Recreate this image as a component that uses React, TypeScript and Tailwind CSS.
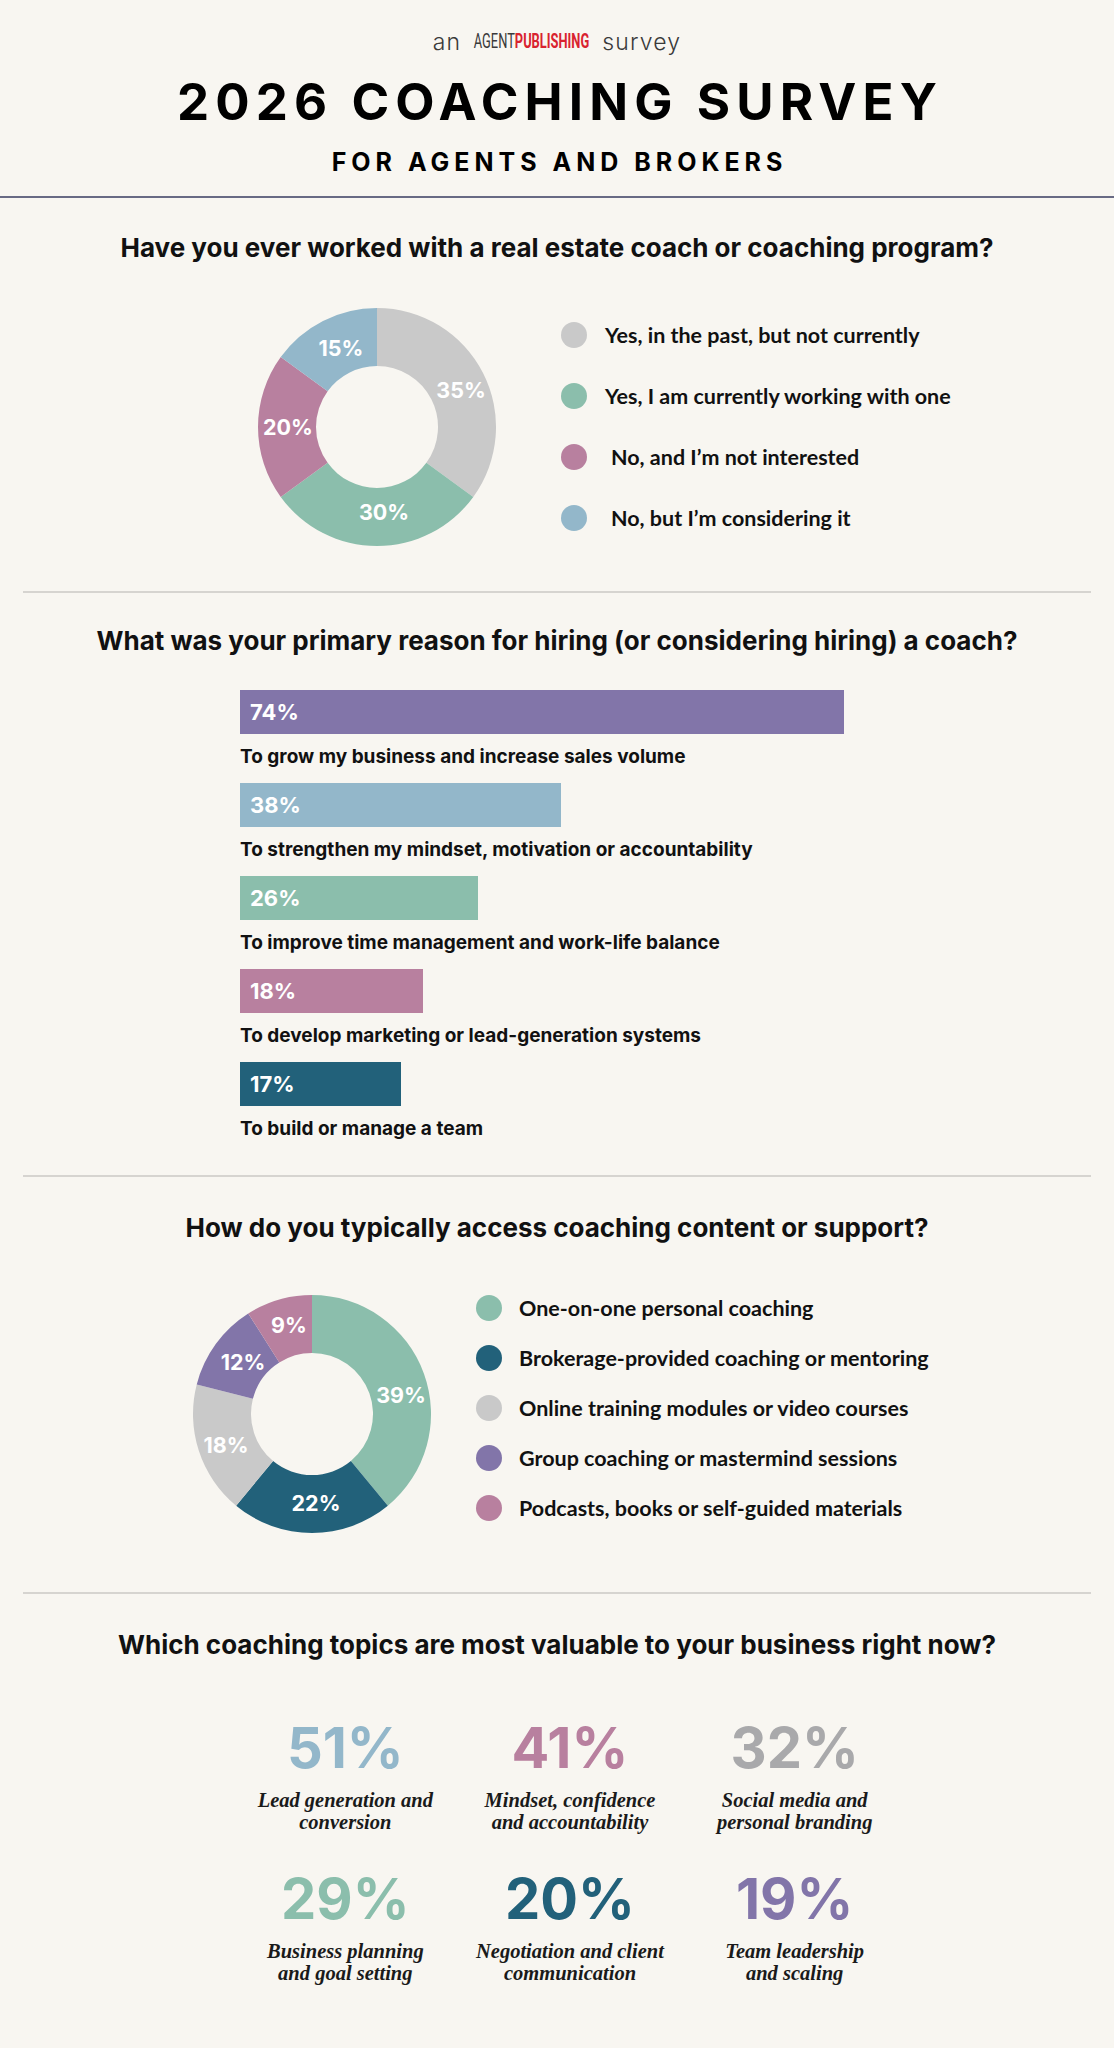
import { FC } from "react";

const COLORS = {
  gray: "#c9c9c9",
  green: "#8bbeac",
  pink: "#b8809f",
  blue: "#93b7ca",
  purple: "#8275a9",
  teal: "#22617a",
};

interface Slice {
  value: number;
  color: string;
  dx: number;
  dy: number;
}

const pt = (r: number, turn: number, c: number): [number, number] => [
  c + r * Math.sin(turn * 2 * Math.PI),
  c - r * Math.cos(turn * 2 * Math.PI),
];

const Donut: FC<{ slices: Slice[] }> = ({ slices }) => {
  const c = 119;
  const outer = 119;
  const inner = 61;
  let start = 0;
  return (
    <svg width="238" height="238" viewBox="0 0 238 238" className="shrink-0">
      {slices.map((s, i) => {
        const a0 = start;
        const a1 = start + s.value / 100;
        start = a1;
        const large = a1 - a0 > 0.5 ? 1 : 0;
        const [x1, y1] = pt(outer, a0, c);
        const [x2, y2] = pt(outer, a1, c);
        const [x3, y3] = pt(inner, a1, c);
        const [x4, y4] = pt(inner, a0, c);
        const d = `M${x1} ${y1} A${outer} ${outer} 0 ${large} 1 ${x2} ${y2} L${x3} ${y3} A${inner} ${inner} 0 ${large} 0 ${x4} ${y4} Z`;
        return <path key={i} d={d} fill={s.color} />;
      })}
      {slices.map((s, i) => (
        <text
          key={`t${i}`}
          x={c + s.dx}
          y={c + s.dy}
          textAnchor="middle"
          dominantBaseline="central"
          fill="#ffffff"
          fontFamily="Inter, sans-serif"
          fontWeight={700}
          fontSize="21.5"
        >
          {s.value}%
        </text>
      ))}
    </svg>
  );
};

const Divider: FC = () => <div className="mx-[23px] h-[2px] bg-[#d6d4d0]" />;

const Question: FC<{ text: string; className: string }> = ({ text, className }) => (
  <h2 className={`text-center text-[26px] leading-[32px] font-bold text-[#111111] ${className}`}>{text}</h2>
);

const legend1 = [
  { color: COLORS.gray, text: "Yes, in the past, but not currently", indent: false },
  { color: COLORS.green, text: "Yes, I am currently working with one", indent: false },
  { color: COLORS.pink, text: "No, and I’m not interested", indent: true },
  { color: COLORS.blue, text: "No, but I’m considering it", indent: true },
];

const legend2 = [
  { color: COLORS.green, text: "One-on-one personal coaching" },
  { color: COLORS.teal, text: "Brokerage-provided coaching or mentoring" },
  { color: COLORS.gray, text: "Online training modules or video courses" },
  { color: COLORS.purple, text: "Group coaching or mastermind sessions" },
  { color: COLORS.pink, text: "Podcasts, books or self-guided materials" },
];

const bars = [
  { pct: "74%", width: "w-[604px]", color: "bg-[#8275a9]", label: "To grow my business and increase sales volume" },
  { pct: "38%", width: "w-[321px]", color: "bg-[#93b7ca]", label: "To strengthen my mindset, motivation or accountability" },
  { pct: "26%", width: "w-[238px]", color: "bg-[#8bbeac]", label: "To improve time management and work-life balance" },
  { pct: "18%", width: "w-[183px]", color: "bg-[#b8809f]", label: "To develop marketing or lead-generation systems" },
  { pct: "17%", width: "w-[161px]", color: "bg-[#22617a]", label: "To build or manage a team" },
];

const stats = [
  { value: "51%", color: "text-[#93b7ca]", l1: "Lead generation and", l2: "conversion" },
  { value: "41%", color: "text-[#b8809f]", l1: "Mindset, confidence", l2: "and accountability" },
  { value: "32%", color: "text-[#a9a9ab]", l1: "Social media and", l2: "personal branding" },
  { value: "29%", color: "text-[#8bbeac]", l1: "Business planning", l2: "and goal setting" },
  { value: "20%", color: "text-[#22617a]", l1: "Negotiation and client", l2: "communication" },
  { value: "19%", color: "text-[#8275a9]", l1: "Team leadership", l2: "and scaling" },
];

export default function App() {
  return (
    <div className="min-h-[2048px] w-full bg-[#f8f6f1] font-['Inter',sans-serif] text-[#111111]">
      {/* header */}
      <header className="flex flex-col items-center pt-[30px]">
        <div className="flex items-center leading-[24px] text-[#3a3a3a]">
          <span className="text-[23px] font-light tracking-[0.05em]">an</span>
          <span className="mx-[-17px] inline-block origin-center scale-x-[0.66] font-['Roboto',sans-serif] text-[19.5px]">
            <span className="font-normal">AGENT</span>
            <span className="font-bold text-[#d9232f]">PUBLISHING</span>
          </span>
          <span className="text-[23px] font-light tracking-[0.05em]">survey</span>
        </div>
        <h1 className="mt-[18px] pl-[0.12em] text-[51px] leading-[60px] font-bold tracking-[0.12em] text-black">
          2026 COACHING SURVEY
        </h1>
        <p className="mt-[15px] pl-[0.2em] text-[25px] leading-[30px] font-bold tracking-[0.2em] text-black">
          FOR AGENTS AND BROKERS
        </p>
      </header>
      <div className="mt-[19px] h-[2px] bg-[#686a84]" />

      {/* section 1 */}
      <Question className="mt-[34px]" text="Have you ever worked with a real estate coach or coaching program?" />
      <div className="mt-[44px] flex items-start pl-[258px]">
        <Donut
          slices={[
            { value: 35, color: COLORS.gray, dx: 84, dy: -37 },
            { value: 30, color: COLORS.green, dx: 7, dy: 85 },
            { value: 20, color: COLORS.pink, dx: -89, dy: 0 },
            { value: 15, color: COLORS.blue, dx: -36, dy: -79 },
          ]}
        />
        <ul className="ml-[65px] flex flex-col gap-[35px] pt-[14px]">
          {legend1.map((item) => (
            <li key={item.text} className="flex h-[26px] items-center">
              <span className="h-[26px] w-[26px] shrink-0 rounded-full" style={{ backgroundColor: item.color }} />
              <span
                className={`font-['Lato',sans-serif] text-[21.5px] font-bold ${item.indent ? "ml-[24px]" : "ml-[18px]"}`}
              >
                {item.text}
              </span>
            </li>
          ))}
        </ul>
      </div>
      <div className="mt-[45px]">
        <Divider />
      </div>

      {/* section 2 */}
      <Question className="mt-[32px]" text="What was your primary reason for hiring (or considering hiring) a coach?" />
      <div className="mt-[33px] flex flex-col gap-[14px] pl-[240px]">
        {bars.map((b) => (
          <div key={b.label}>
            <div className={`flex h-[44px] items-center pl-[10px] ${b.width} ${b.color}`}>
              <span className="text-[22px] font-bold text-white">{b.pct}</span>
            </div>
            <p className="mt-[11px] text-[19px] leading-[24px] font-bold">{b.label}</p>
          </div>
        ))}
      </div>
      <div className="mt-[34px]">
        <Divider />
      </div>

      {/* section 3 */}
      <Question className="mt-[35px]" text="How do you typically access coaching content or support?" />
      <div className="mt-[51px] flex items-start pl-[193px]">
        <Donut
          slices={[
            { value: 39, color: COLORS.green, dx: 89, dy: -19 },
            { value: 22, color: COLORS.teal, dx: 4, dy: 89 },
            { value: 18, color: COLORS.gray, dx: -86, dy: 31 },
            { value: 12, color: COLORS.purple, dx: -69, dy: -52 },
            { value: 9, color: COLORS.pink, dx: -23, dy: -89 },
          ]}
        />
        <ul className="ml-[45px] flex flex-col gap-[24px]">
          {legend2.map((item) => (
            <li key={item.text} className="flex h-[26px] items-center">
              <span className="h-[26px] w-[26px] shrink-0 rounded-full" style={{ backgroundColor: item.color }} />
              <span className="ml-[17px] font-['Lato',sans-serif] text-[21.5px] font-bold">{item.text}</span>
            </li>
          ))}
        </ul>
      </div>
      <div className="mt-[59px]">
        <Divider />
      </div>

      {/* section 4 */}
      <Question className="mt-[35px]" text="Which coaching topics are most valuable to your business right now?" />
      <div className="mt-[57px] ml-[233px] grid w-[674px] grid-cols-3 gap-y-[36px]">
        {stats.map((s) => (
          <div key={s.value} className="flex flex-col items-center">
            <span className={`text-[56px] leading-[60px] font-bold ${s.color}`}>{s.value}</span>
            <p className="mt-[11px] text-center font-['Liberation_Serif',serif] text-[20.5px] leading-[22px] font-bold italic text-[#1a1a1a]">
              {s.l1}
              <br />
              {s.l2}
            </p>
          </div>
        ))}
      </div>
    </div>
  );
}
